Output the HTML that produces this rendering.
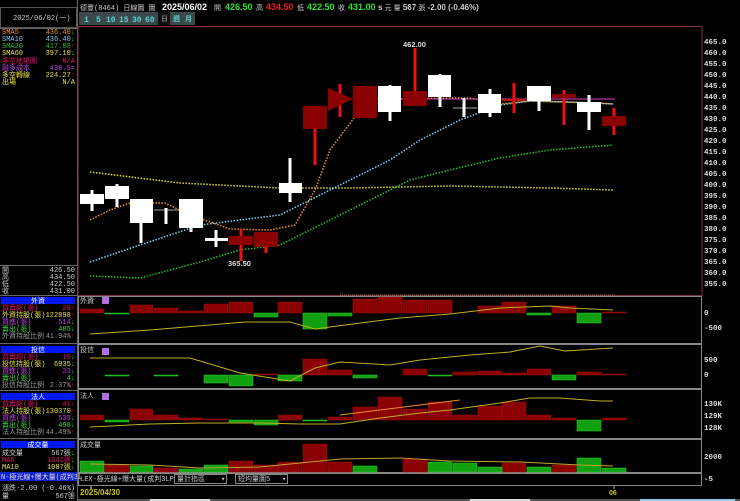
<!DOCTYPE html>
<html><head><meta charset="utf-8"><style>
html,body{margin:0;padding:0;background:#000;width:740px;height:501px;overflow:hidden}
svg{display:block}
text{font-family:"Liberation Mono","Noto Sans CJK TC",monospace}
.s{font-size:7px}
.b{font-family:"Liberation Sans","Noto Sans CJK TC",sans-serif;font-weight:bold}
</style></head><body>
<svg width="740" height="501" viewBox="0 0 740 501" xmlns="http://www.w3.org/2000/svg">
<rect width="740" height="501" fill="#000"/>
<!-- left panel -->
<rect x="0.5" y="7.5" width="76" height="20" fill="none" stroke="#555"/>
<text x="13" y="20" class="s" fill="#ccc">2025/06/02(一)</text>
<line x1="0" y1="28.5" x2="77" y2="28.5" stroke="#666"/>
<g class="s">
<text x="2" y="34" fill="#e8902c">SMA5</text><text x="75" y="34" fill="#e8902c" text-anchor="end">436.40<tspan fill="#0f0">↓</tspan></text>
<text x="2" y="41" fill="#7cc8e8">SMA10</text><text x="75" y="41" fill="#7cc8e8" text-anchor="end">436.40<tspan fill="#0f0">↓</tspan></text>
<text x="2" y="48" fill="#2cb82c">SMA20</text><text x="75" y="48" fill="#2cb82c" text-anchor="end">417.88<tspan fill="#f00">↑</tspan></text>
<text x="2" y="55" fill="#e8e040">SMA60</text><text x="75" y="55" fill="#e8e040" text-anchor="end">397.10<tspan fill="#0f0">↓</tspan></text>
<text x="2" y="63" fill="#e0106a">多空地場圖</text><text x="75" y="63" fill="#e0106a" text-anchor="end">N/A</text>
<text x="2" y="70" fill="#c040e0">融多成本</text><text x="75" y="70" fill="#c040e0" text-anchor="end">438.5=</text>
<text x="2" y="77" fill="#e8e040">多空轉線</text><text x="75" y="77" fill="#e8e040" text-anchor="end">224.27<tspan fill="#f00">↑</tspan></text>
<text x="2" y="84" fill="#e8e040">出場</text><text x="75" y="84" fill="#e8e040" text-anchor="end">N/A</text>
</g>
<line x1="0" y1="265.5" x2="77" y2="265.5" stroke="#666"/>
<g class="s" fill="#ccc">
<text x="2" y="272">開</text><text x="75" y="272" text-anchor="end">426.50</text>
<text x="2" y="279">高</text><text x="75" y="279" text-anchor="end">434.50</text>
<text x="2" y="286">低</text><text x="75" y="286" text-anchor="end">422.50</text>
<text x="2" y="293">收</text><text x="75" y="293" text-anchor="end">431.00</text>
</g>
<line x1="0" y1="295.5" x2="77" y2="295.5" stroke="#666"/>
<!-- 外資 -->
<rect x="1" y="297" width="74" height="7" fill="#0018f0"/><text x="38" y="303" class="s" fill="#fff" text-anchor="middle">外資</text>
<g class="s">
<text x="2" y="310" fill="#e0106a">買賣超(張)</text><text x="75" y="310" fill="#e0106a" text-anchor="end">29<tspan fill="#f00">↑</tspan></text>
<text x="2" y="317" fill="#e8e040">外資持股(張)</text><text x="75" y="317" fill="#e8e040" text-anchor="end">122898<tspan fill="#f00">↑</tspan></text>
<text x="2" y="324" fill="#c040e0">買進(張)</text><text x="75" y="324" fill="#c040e0" text-anchor="end">514<tspan fill="#0f0">↓</tspan></text>
<text x="2" y="331" fill="#40d040">賣出(張)</text><text x="75" y="331" fill="#40d040" text-anchor="end">485<tspan fill="#0f0">↓</tspan></text>
<text x="2" y="338" fill="#999">外資持股比例</text><text x="75" y="338" fill="#999" text-anchor="end">41.94%<tspan fill="#f00">↑</tspan></text>
</g>
<line x1="0" y1="343.5" x2="77" y2="343.5" stroke="#666"/>
<rect x="1" y="346" width="74" height="7" fill="#0018f0"/><text x="38" y="352" class="s" fill="#fff" text-anchor="middle">投信</text>
<g class="s">
<text x="2" y="359" fill="#e0106a">買賣超(張)</text><text x="75" y="359" fill="#e0106a" text-anchor="end">19<tspan fill="#0f0">↓</tspan></text>
<text x="2" y="366" fill="#e8e040">投信持股(張)</text><text x="75" y="366" fill="#e8e040" text-anchor="end">6935<tspan fill="#0f0">↓</tspan></text>
<text x="2" y="373" fill="#c040e0">買進(張)</text><text x="75" y="373" fill="#c040e0" text-anchor="end">23<tspan fill="#0f0">↓</tspan></text>
<text x="2" y="380" fill="#40d040">賣出(張)</text><text x="75" y="380" fill="#40d040" text-anchor="end">4<tspan fill="#0f0">↓</tspan></text>
<text x="2" y="387" fill="#999">投信持股比例</text><text x="75" y="387" fill="#999" text-anchor="end">2.37%<tspan fill="#f00">↑</tspan></text>
</g>
<line x1="0" y1="390.5" x2="77" y2="390.5" stroke="#666"/>
<rect x="1" y="393" width="74" height="7" fill="#0018f0"/><text x="38" y="399" class="s" fill="#fff" text-anchor="middle">法人</text>
<g class="s">
<text x="2" y="406" fill="#e0106a">買賣超(張)</text><text x="75" y="406" fill="#e0106a" text-anchor="end">41<tspan fill="#f00">↑</tspan></text>
<text x="2" y="413" fill="#e8e040">法人持股(張)</text><text x="75" y="413" fill="#e8e040" text-anchor="end">130370<tspan fill="#f00">↑</tspan></text>
<text x="2" y="420" fill="#c040e0">買進(張)</text><text x="75" y="420" fill="#c040e0" text-anchor="end">539<tspan fill="#0f0">↓</tspan></text>
<text x="2" y="427" fill="#40d040">賣出(張)</text><text x="75" y="427" fill="#40d040" text-anchor="end">498<tspan fill="#0f0">↓</tspan></text>
<text x="2" y="434" fill="#999">法人持股比例</text><text x="75" y="434" fill="#999" text-anchor="end">44.49%<tspan fill="#f00">↑</tspan></text>
</g>
<line x1="0" y1="438.5" x2="77" y2="438.5" stroke="#666"/>
<rect x="1" y="441" width="74" height="7" fill="#0018f0"/><text x="38" y="447" class="s" fill="#fff" text-anchor="middle">成交量</text>
<g class="s">
<text x="2" y="455" fill="#ccc">成交量</text><text x="75" y="455" fill="#ccc" text-anchor="end">567張<tspan fill="#0f0">↓</tspan></text>
<text x="2" y="462" fill="#e0106a">MA5</text><text x="75" y="462" fill="#e0106a" text-anchor="end">1041張<tspan fill="#0f0">↓</tspan></text>
<text x="2" y="469" fill="#e8e040">MA10</text><text x="75" y="469" fill="#e8e040" text-anchor="end">1087張<tspan fill="#0f0">↓</tspan></text>
</g>
<rect x="0" y="472" width="77" height="9" fill="#1020d0"/>
<text x="1" y="479" class="s" fill="#ddd">N-極光線+爆大量(成判3L</text>
<g class="s" fill="#ccc">
<text x="2" y="490">漲跌</text><text x="75" y="490" text-anchor="end">-2.00 (-0.46%)</text>
<text x="2" y="498">量</text><text x="75" y="498" text-anchor="end">567張</text>
</g>
<line x1="77.5" y1="0" x2="77.5" y2="501" stroke="#666"/>

<!-- header -->
<text x="80" y="10" class="s" fill="#ccc" font-size="7.5">德豐(8464)    日線圖 圖</text>
<text x="162" y="10" class="b" fill="#fff" font-size="9">2025/06/02</text>
<text x="214" y="10" class="s" fill="#ccc">開</text><text x="225" y="10" class="b" fill="#2ce02c" font-size="9">426.50</text>
<text x="256" y="10" class="s" fill="#ccc">高</text><text x="266" y="10" class="b" fill="#e82020" font-size="9">434.50</text>
<text x="297" y="10" class="s" fill="#ccc">低</text><text x="307" y="10" class="b" fill="#2ce02c" font-size="9">422.50</text>
<text x="338" y="10" class="s" fill="#ccc">收</text><text x="348" y="10" class="b" fill="#2ce02c" font-size="9">431.00</text>
<text x="378" y="10" class="b" fill="#ccc" font-size="8">s <tspan font-weight="normal" font-size="7">元  量</tspan> 567 <tspan font-weight="normal" font-size="7">張</tspan>  -2.00 (-0.46%)</text>
<g font-size="8" class="b">
<rect x="79" y="12" width="116" height="13" fill="#3a4a4a"/>
<text x="84" y="22" fill="#5ad0d0">1</text><text x="96" y="22" fill="#5ad0d0">5</text>
<text x="106" y="22" fill="#5ad0d0">10</text><text x="119" y="22" fill="#5ad0d0">15</text>
<text x="132" y="22" fill="#5ad0d0">30</text><text x="145" y="22" fill="#5ad0d0">60</text>
<rect x="158" y="12" width="12" height="13" fill="#111"/><text x="161" y="21" class="s" fill="#777">日</text>
<text x="173" y="21" class="s" fill="#5ad0d0">週</text><text x="185" y="21" class="s" fill="#5ad0d0">月</text>
</g>

<!-- main chart frame -->
<rect x="78" y="26.5" width="624" height="269" fill="none" stroke="#7a3040"/>
<!-- price axis -->
<g class="b" font-size="7.5" fill="#ddd">
<text x="704" y="44">465.0</text><text x="704" y="55">460.0</text><text x="704" y="66">455.0</text><text x="704" y="77">450.0</text><text x="704" y="88">445.0</text><text x="704" y="99">440.0</text><text x="704" y="110">435.0</text><text x="704" y="121">430.0</text><text x="704" y="132">425.0</text><text x="704" y="143">420.0</text><text x="704" y="154">415.0</text><text x="704" y="165">410.0</text><text x="704" y="176">405.0</text><text x="704" y="187">400.0</text><text x="704" y="198">395.0</text><text x="704" y="209">390.0</text><text x="704" y="220">385.0</text><text x="704" y="231">380.0</text><text x="704" y="242">375.0</text><text x="704" y="253">370.0</text><text x="704" y="264">365.0</text><text x="704" y="275">360.0</text><text x="704" y="286">355.0</text>
</g>
<!-- MAs -->
<polyline fill="none" stroke="#e0e030" stroke-width="1.5" stroke-dasharray="1.5,1.5" points="90,172 180,183 280,188 350,188 450,186 550,188 613,190"/>
<polyline fill="none" stroke="#2cc02c" stroke-width="1.5" stroke-dasharray="1.5,1.5" points="90,276 140,278 200,262 240,250 280,245 320,225 370,200 410,180 450,170 500,158 550,150 613,145"/>
<polyline fill="none" stroke="#80d0f0" stroke-width="1.5" stroke-dasharray="1.5,1.5" points="90,262 140,245 200,225 240,220 280,215 310,200 350,180 390,160 420,140 460,120 500,105 530,101 570,102 613,104"/>
<polyline fill="none" stroke="#f09030" stroke-width="1.5" stroke-dasharray="1.5,1.5" points="90,220 110,210 130,203 165,203 190,215 230,229 270,230 295,225 315,190 330,150 360,110 390,99 450,98 470,98 500,104 530,101 560,102 600,103 613,104"/>
<line x1="340" y1="99" x2="615" y2="99" stroke="#e040c0"/>
<!-- candles -->
<g>
<line x1="92" y1="190" x2="92" y2="211" stroke="#fff" stroke-width="3"/><rect x="80" y="194" width="24" height="10" fill="#fff"/>
<line x1="117" y1="184" x2="117" y2="207" stroke="#fff" stroke-width="3"/><rect x="105" y="186" width="24" height="13" fill="#fff"/>
<line x1="141" y1="199" x2="141" y2="243" stroke="#fff" stroke-width="3"/><rect x="130" y="199" width="23" height="24" fill="#fff"/>
<line x1="154" y1="210" x2="178" y2="210" stroke="#aaa"/><line x1="166" y1="208" x2="166" y2="224" stroke="#fff" stroke-width="3"/>
<line x1="191" y1="199" x2="191" y2="232" stroke="#fff" stroke-width="3"/><rect x="179" y="199" width="24" height="29" fill="#fff"/>
<line x1="216" y1="230" x2="216" y2="247" stroke="#fff" stroke-width="3"/><rect x="205" y="238" width="23" height="3" fill="#fff"/>
<line x1="241" y1="229" x2="241" y2="261" stroke="#f01010" stroke-width="3"/><rect x="229" y="236" width="24" height="9" fill="#8b0000"/>
<line x1="266" y1="232" x2="266" y2="253" stroke="#f01010" stroke-width="3"/><rect x="254" y="232" width="24" height="15" fill="#8b0000"/>
<line x1="290" y1="158" x2="290" y2="202" stroke="#fff" stroke-width="3"/><rect x="279" y="183" width="23" height="10" fill="#fff"/>
<line x1="315" y1="106" x2="315" y2="165" stroke="#f01010" stroke-width="3"/><rect x="303" y="106" width="24" height="23" fill="#8b0000"/>
<line x1="340" y1="84" x2="340" y2="117" stroke="#f01010" stroke-width="3"/><polygon points="328,88 353,99 328,111" fill="#8b0000"/>
<rect x="353" y="86" width="24" height="32" fill="#8b0000"/>
<line x1="390" y1="85" x2="390" y2="121" stroke="#fff" stroke-width="3"/><rect x="378" y="86" width="23" height="26" fill="#fff"/>
<line x1="415" y1="48" x2="415" y2="106" stroke="#f01010" stroke-width="3"/><rect x="403" y="91" width="24" height="15" fill="#8b0000"/>
<line x1="440" y1="74" x2="440" y2="107" stroke="#fff" stroke-width="3"/><rect x="428" y="75" width="23" height="22" fill="#fff"/>
<line x1="453" y1="108" x2="477" y2="108" stroke="#aaa"/><line x1="464" y1="98" x2="464" y2="117" stroke="#fff" stroke-width="3"/>
<line x1="490" y1="89" x2="490" y2="117" stroke="#fff" stroke-width="3"/><rect x="478" y="94" width="23" height="19" fill="#fff"/>
<line x1="514" y1="83" x2="514" y2="113" stroke="#f01010" stroke-width="3"/><rect x="502" y="99" width="24" height="2" fill="#c01010"/>
<line x1="539" y1="86" x2="539" y2="111" stroke="#fff" stroke-width="3"/><rect x="527" y="86" width="24" height="15" fill="#fff"/>
<line x1="564" y1="90" x2="564" y2="125" stroke="#f01010" stroke-width="3"/><rect x="552" y="94" width="24" height="4" fill="#8b0000"/>
<line x1="589" y1="95" x2="589" y2="130" stroke="#fff" stroke-width="3"/><rect x="577" y="102" width="24" height="10" fill="#fff"/>
<line x1="614" y1="108" x2="614" y2="135" stroke="#f01010" stroke-width="3"/><rect x="602" y="116" width="24" height="10" fill="#8b0000"/>
</g>
<text x="403" y="47" class="b" font-size="7.5" fill="#ddd">462.00</text>
<text x="228" y="266" class="b" font-size="7.5" fill="#ddd">365.50</text>
<line x1="340" y1="295" x2="615" y2="295" stroke="#a08050" stroke-dasharray="1,1"/>

<!-- sub panels frames -->
<g fill="none" stroke="#888">
<rect x="78.5" y="296.5" width="623" height="47"/>
<rect x="78.5" y="344.5" width="623" height="44"/>
<rect x="78.5" y="389.5" width="623" height="49"/>
<rect x="78.5" y="439.5" width="623" height="33"/>
<rect x="78.5" y="473.5" width="623" height="12"/>
</g>
<g class="s" fill="#ccc"><text x="80" y="303">外資</text><text x="80" y="352">投信</text><text x="80" y="398">法人</text><text x="80" y="447">成交量</text></g>
<rect x="102" y="297" width="7" height="7" fill="#b070e0"/><rect x="102" y="348" width="7" height="7" fill="#b070e0"/><rect x="102" y="393" width="7" height="7" fill="#b070e0"/>
<!-- 外資 bars -->
<g fill="#8b0000" stroke="#a01010" stroke-width="0.5">
<rect x="80" y="309" width="24" height="4"/><rect x="130" y="305" width="23" height="8"/><rect x="154" y="308" width="24" height="5"/><rect x="179" y="311" width="24" height="2"/><rect x="204" y="304" width="24" height="9"/><rect x="229" y="302" width="24" height="11"/><rect x="278" y="302" width="24" height="11"/><rect x="353" y="299" width="24" height="14"/><rect x="378" y="297" width="24" height="16"/><rect x="403" y="300" width="24" height="13"/><rect x="428" y="300" width="24" height="13"/><rect x="478" y="306" width="24" height="7"/><rect x="502" y="302" width="24" height="11"/><rect x="552" y="306" width="24" height="7"/><rect x="602" y="312" width="24" height="1"/>
</g>
<g fill="#10a010" stroke="#30d030" stroke-width="0.5">
<rect x="105" y="313" width="24" height="1"/><rect x="254" y="313" width="24" height="4"/><rect x="303" y="313" width="24" height="16"/><rect x="328" y="313" width="24" height="3"/><rect x="527" y="313" width="24" height="2"/><rect x="577" y="313" width="24" height="10"/>
</g>
<polyline fill="none" stroke="#c0b020" points="90,334 150,330 245,322 290,322 315,329 345,325 400,318 450,314 500,308 550,306 570,308 613,310"/>
<!-- 投信 -->
<g fill="#8b0000" stroke="#a01010" stroke-width="0.5">
<rect x="254" y="374" width="24" height="1"/><rect x="303" y="359" width="24" height="16"/><rect x="328" y="370" width="24" height="5"/><rect x="403" y="369" width="24" height="6"/><rect x="453" y="372" width="24" height="3"/><rect x="478" y="371" width="24" height="4"/><rect x="502" y="373" width="24" height="2"/><rect x="527" y="369" width="24" height="6"/><rect x="577" y="372" width="24" height="3"/><rect x="602" y="374" width="24" height="1"/>
</g>
<g fill="#10a010" stroke="#30d030" stroke-width="0.5">
<rect x="105" y="375" width="24" height="1"/><rect x="154" y="375" width="24" height="1"/><rect x="204" y="375" width="24" height="8"/><rect x="229" y="375" width="24" height="11"/><rect x="278" y="375" width="24" height="6"/><rect x="353" y="375" width="24" height="3"/><rect x="428" y="375" width="24" height="1"/><rect x="552" y="375" width="24" height="5"/>
</g>
<polyline fill="none" stroke="#c0b020" points="90,358 190,358 240,373 290,381 315,368 340,362 390,365 420,360 470,355 510,352 540,346 565,351 613,348"/>
<!-- 法人 -->
<g fill="#8b0000" stroke="#a01010" stroke-width="0.5">
<rect x="80" y="415" width="24" height="5"/><rect x="130" y="409" width="23" height="11"/><rect x="154" y="415" width="24" height="5"/><rect x="179" y="418" width="24" height="2"/><rect x="204" y="419" width="24" height="1"/><rect x="278" y="415" width="24" height="5"/><rect x="328" y="417" width="24" height="3"/><rect x="353" y="407" width="24" height="13"/><rect x="378" y="397" width="24" height="23"/><rect x="403" y="409" width="24" height="11"/><rect x="428" y="402" width="24" height="18"/><rect x="453" y="415" width="24" height="5"/><rect x="478" y="406" width="24" height="14"/><rect x="502" y="402" width="24" height="18"/><rect x="527" y="415" width="24" height="5"/><rect x="552" y="418" width="24" height="2"/><rect x="602" y="418" width="24" height="2"/>
</g>
<g fill="#10a010" stroke="#30d030" stroke-width="0.5">
<rect x="105" y="420" width="24" height="2"/><rect x="229" y="420" width="24" height="2"/><rect x="254" y="420" width="24" height="5"/><rect x="303" y="420" width="24" height="1"/><rect x="577" y="420" width="24" height="11"/>
</g>
<polyline fill="none" stroke="#c0b020" points="90,427 150,424 200,423 260,423 300,424 340,424 380,418 420,413 450,410 500,403 530,398 560,398 600,401 613,401"/>
<polyline fill="none" stroke="#f09030" points="340,415 380,410 420,405 460,400"/>
<!-- 成交量 -->
<g fill="#8b0000" stroke="#a01010" stroke-width="0.5">
<rect x="105" y="465" width="24" height="7"/><rect x="154" y="468" width="24" height="4"/><rect x="229" y="461" width="24" height="11"/><rect x="254" y="465" width="24" height="7"/><rect x="278" y="462" width="24" height="10"/><rect x="303" y="444" width="24" height="28"/><rect x="328" y="462" width="24" height="10"/><rect x="403" y="459" width="24" height="13"/><rect x="502" y="463" width="24" height="9"/><rect x="552" y="465" width="24" height="7"/>
</g>
<g fill="#10a010" stroke="#30d030" stroke-width="0.5">
<rect x="80" y="461" width="24" height="11"/><rect x="130" y="466" width="23" height="6"/><rect x="179" y="469" width="24" height="3"/><rect x="204" y="465" width="24" height="7"/><rect x="353" y="466" width="24" height="6"/><rect x="428" y="462" width="24" height="10"/><rect x="453" y="463" width="24" height="9"/><rect x="478" y="467" width="24" height="5"/><rect x="527" y="467" width="24" height="5"/><rect x="577" y="458" width="24" height="14"/><rect x="602" y="468" width="24" height="4"/>
</g>
<polyline fill="none" stroke="#c0a030" points="90,464 150,465 200,468 260,467 300,463 340,459 400,458 450,461 520,462 580,465 613,466"/>
<!-- right axis sub -->
<g class="b" font-size="7.5" fill="#ddd">
<text x="704" y="315">0</text><text x="704" y="330">-500</text>
<text x="704" y="362">500</text><text x="704" y="377">0</text>
<text x="704" y="406">130K</text><text x="704" y="418">129K</text><text x="704" y="430">128K</text>
<text x="704" y="459">2000</text><text x="704" y="481">-5</text>
</g>
<!-- bottom row -->
<text x="80" y="481" class="s" fill="#ccc">LEX-極光線+爆大量(成判3LP)</text>
<rect x="174.5" y="474.5" width="52" height="9" fill="#000" stroke="#888"/><text x="177" y="481" class="s" fill="#ccc">量計指區</text><text x="221" y="481" class="s" fill="#ccc">▾</text>
<rect x="235.5" y="474.5" width="52" height="9" fill="#000" stroke="#888"/><text x="238" y="481" class="s" fill="#ccc">短均量圖5</text><text x="282" y="481" class="s" fill="#ccc">▾</text>
<text x="80" y="495" class="b" font-size="8" fill="#c8c020">2025/04/30</text>
<line x1="91" y1="486" x2="91" y2="489" stroke="#ccc"/>
<line x1="614" y1="486" x2="614" y2="489" stroke="#c8c020"/>
<text x="609" y="495" class="b" font-size="7" fill="#c8c020">06</text>
<rect x="78" y="499" width="662" height="2" fill="#555"/>
<rect x="150" y="499" width="60" height="2" fill="#ddd"/><rect x="470" y="499" width="60" height="2" fill="#ddd"/><rect x="640" y="499" width="95" height="2" fill="#8cc8e8"/>
</svg>
</body></html>
